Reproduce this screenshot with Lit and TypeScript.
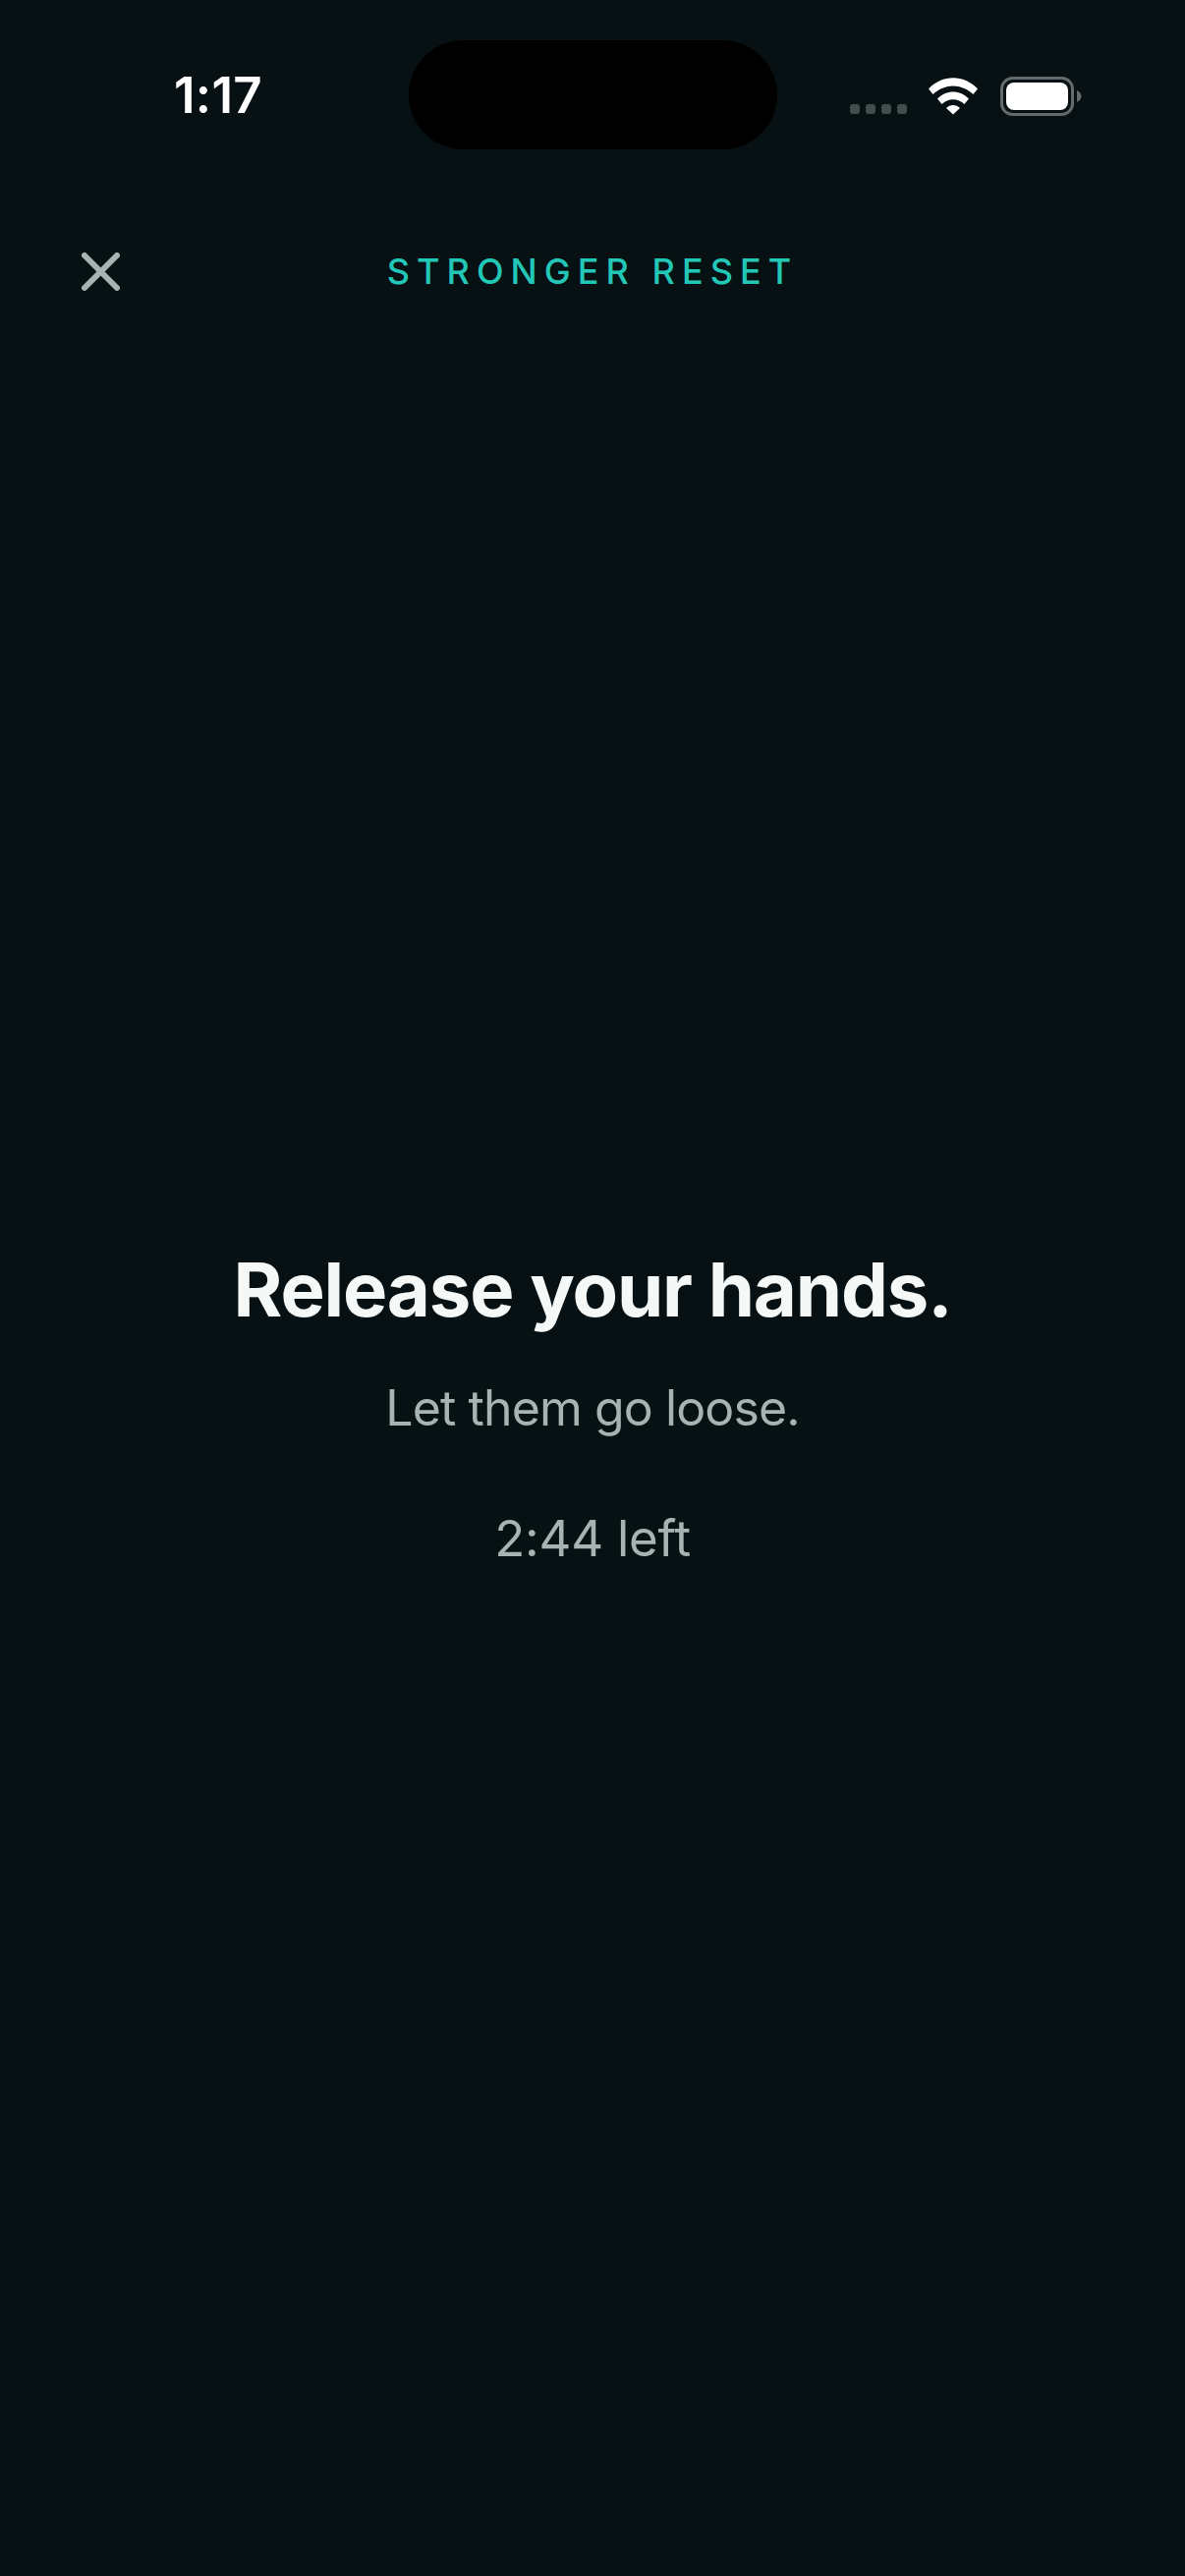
import { LitElement, html, css } from "lit";
import { customElement } from "lit/decorators.js";

@customElement("app-root")
export class AppRoot extends LitElement {
  static styles = css`
    :host {
      display: block;
      width: 1206px;
      height: 2622px;
      background: #071012;
      font-family: Inter, "Noto Sans", sans-serif;
      overflow: hidden;
    }
    .page { display: flex; flex-direction: column; height: 100%; }
    .status {
      display: grid;
      grid-template-columns: 415.5px 375px 1fr;
      padding-top: 41px;
      height: 111px;
    }
    .time {
      font-size: 51px;
      line-height: 62px;
      font-weight: 600;
      color: #fff;
      letter-spacing: 0.3px;
      padding: 25px 0 0 177px;
    }
    .island { background: #000; border-radius: 55.5px; height: 111px; }
    .sys { display: flex; align-items: flex-start; padding: 36px 0 0 74.5px; }
    .sys svg { display: block; }
    .header {
      display: grid;
      grid-template-columns: 1fr auto 1fr;
      align-items: center;
      padding: 0 83px;
      margin-top: 88px;
      height: 72px;
    }
    .close { display: block; }
    .title {
      font-size: 36px;
      line-height: 44px;
      font-weight: 550;
      letter-spacing: 7.05px;
      color: #22c7b8;
      white-space: nowrap;
    }
    .main {
      flex: 1;
      display: flex;
      flex-direction: column;
      align-items: center;
      padding-top: 954.4px;
    }
    h1 {
      margin: 0;
      font-size: 76px;
      line-height: 92px;
      font-weight: 700;
      color: #f4f8f7;
      letter-spacing: -1.15px;
    }
    .sub {
      margin: 44.2px 0 0;
      font-size: 50px;
      line-height: 60px;
      font-weight: 400;
      color: #a5b3b2;
      letter-spacing: -0.9px;
    }
    .left {
      margin: 72.5px 0 0;
      font-size: 51px;
      line-height: 62px;
      font-weight: 400;
      color: #a5b3b2;
      letter-spacing: -0.25px;
    }
  `;

  render() {
    return html`
      <div class="page">
        <div class="status">
          <div class="time">1:17</div>
          <div class="island"></div>
          <div class="sys">
            <svg width="236" height="42" viewBox="0 0 236 42">
              <g fill="#434c4d">
                <rect x="0" y="29" width="10" height="10" rx="3"></rect>
                <rect x="16" y="29" width="10" height="10" rx="3"></rect>
                <rect x="32" y="29" width="10" height="10" rx="3"></rect>
                <rect x="48" y="29" width="10" height="10" rx="3"></rect>
              </g>
              <g fill="#fff">
                <path d="M80 13.5 C94 -1.5 116 -1.5 130 13.5 L125.5 19 C113 7.5 97 7.5 84.5 19 Z"></path>
                <path d="M89 23.5 C98 14 112 14 121 23.5 L116.5 29 C110 22.5 100 22.5 93.5 29 Z"></path>
                <path d="M98 33 C102 29 108 29 112 33 L105 39.5 Z"></path>
              </g>
              <rect x="154.5" y="2.5" width="72" height="37" rx="11" fill="none" stroke="#646b6d" stroke-width="3"></rect>
              <rect x="159" y="7" width="63" height="28" rx="8" fill="#fff"></rect>
              <path d="M231 15 C234 16.5 235.5 18.5 235.5 21 C235.5 23.5 234 25.5 231 27 Z" fill="#646b6d"></path>
            </svg>
          </div>
        </div>
        <div class="header">
          <svg class="close" width="39" height="39" viewBox="0 0 39 39" fill="none" stroke="#a5b3b2" stroke-width="6" stroke-linecap="round">
            <path d="M3 3 L36 36 M36 3 L3 36"></path>
          </svg>
          <div class="title">STRONGER RESET</div>
          <div></div>
        </div>
        <div class="main">
          <h1>Release your hands.</h1>
          <p class="sub">Let them go loose.</p>
          <p class="left">2:44 left</p>
        </div>
      </div>
    `;
  }
}
